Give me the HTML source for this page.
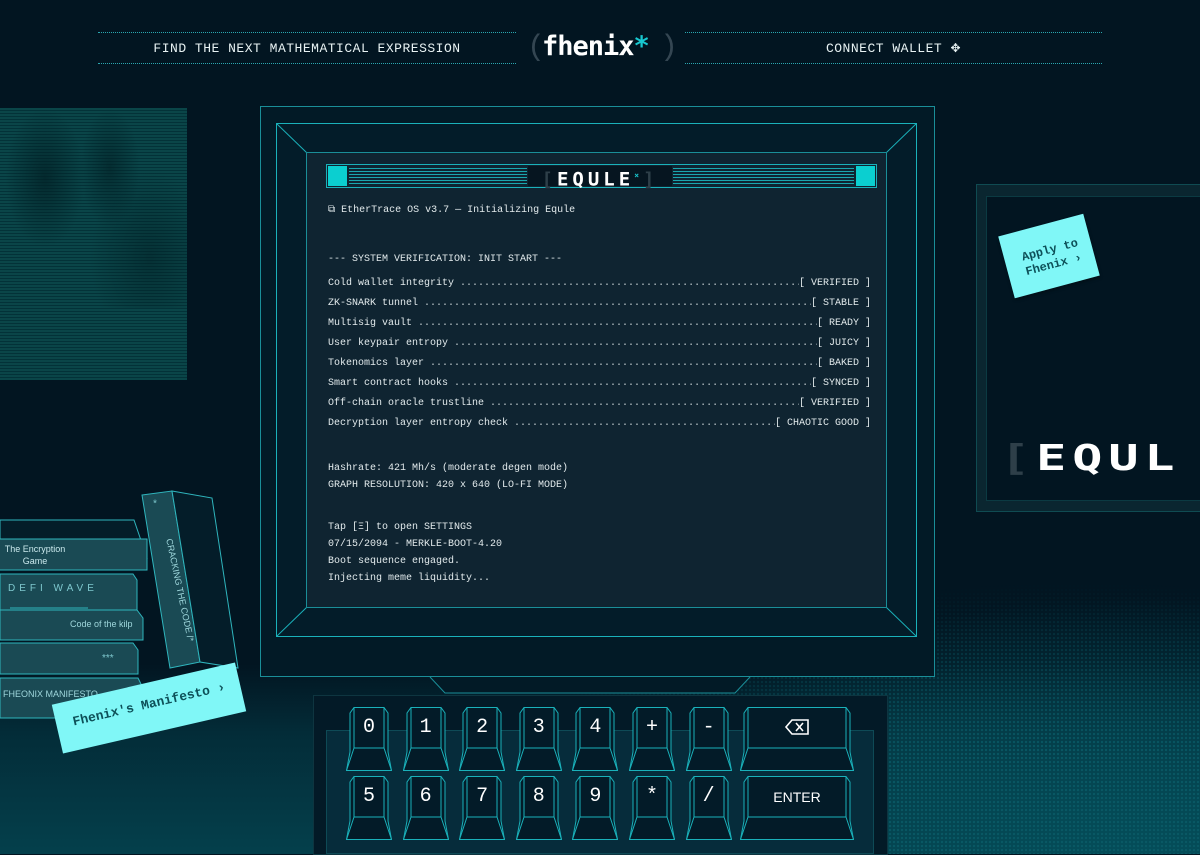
<!DOCTYPE html>
<html><head><meta charset="utf-8"><style>
*{box-sizing:border-box;margin:0;padding:0}
body{width:1200px;height:854px;background:#021521;overflow:hidden;position:relative;font-family:"Liberation Mono",monospace;color:#e6f0f2}
.abs{position:absolute}
.dither{position:absolute;left:0;top:500px;width:1200px;height:354px;
background:radial-gradient(ellipse 700px 320px at 95% 100%,rgba(4,78,90,.95),rgba(4,70,82,.5) 50%,rgba(2,21,33,0) 80%),linear-gradient(to top,rgba(4,66,78,.95) 0,rgba(4,60,72,.6) 120px,rgba(2,21,33,0) 190px);}
.dots{position:absolute;left:0;top:500px;width:1200px;height:354px;
background-image:radial-gradient(circle,#0a5a66 1px,transparent 1.4px);background-size:4px 4px;
-webkit-mask-image:radial-gradient(ellipse 800px 340px at 90% 100%,#000 30%,transparent 80%);opacity:.9}
.hdr{position:absolute;top:32px;height:32px;border-top:1px dotted #2aa7b0;border-bottom:1px dotted #2aa7b0;font-size:13px;letter-spacing:.5px;display:flex;align-items:center;justify-content:center;color:#e8f2f3}
.screen-line{display:flex;height:20px;align-items:center;font-size:10px;color:#e2eaec;white-space:nowrap}
.screen-line .d{flex:1;overflow:hidden;padding:0 6px;color:#c8d2d5}
.key{position:absolute;width:44px;height:64px}
.key>svg{position:absolute;left:0;top:0}
.key>span{position:absolute;left:0;right:0;top:6px;height:30px;text-align:center;font-size:20px;line-height:30px;color:#fff}
</style></head><body>
<div class="dither"></div><div class="dots"></div>

<!-- header -->
<div class="hdr" style="left:98px;width:418px">FIND THE NEXT MATHEMATICAL EXPRESSION</div>
<div class="hdr" style="left:685px;width:417px">CONNECT WALLET&nbsp;<span style="font-size:12px">✥</span></div>
<div class="abs" style="left:527px;top:30px;font-family:'Liberation Mono';font-size:30px;color:#344652;line-height:36px">(</div>
<div class="abs" style="left:542px;top:29px;font-family:'DejaVu Sans Mono',monospace;font-weight:bold;font-size:27px;color:#fff;line-height:36px;letter-spacing:-1px">fhenix<span style="color:#18c8d0">*</span></div>
<div class="abs" style="left:660px;top:30px;font-family:'Liberation Mono';font-size:30px;color:#344652;line-height:36px">)</div>

<!-- top-left art -->
<div class="abs" style="left:0;top:108px;width:187px;height:272px;background:repeating-linear-gradient(0deg,#0a4548 0 2px,#033238 2px 3px)"></div>
<div class="abs" style="left:0;top:108px;width:187px;height:200px;background:radial-gradient(ellipse 40px 70px at 45px 70px,rgba(1,30,35,.7),transparent),radial-gradient(ellipse 30px 60px at 110px 60px,rgba(1,30,35,.6),transparent),radial-gradient(ellipse 60px 90px at 150px 150px,rgba(1,30,35,.5),transparent)"></div>

<!-- right monitor -->
<div class="abs" style="left:976px;top:184px;width:240px;height:328px;border:1px solid #0f4b52;background:#0a2630"></div>
<div class="abs" style="left:986px;top:196px;width:230px;height:305px;background:#021521;border:1px solid #0b3a42"></div>
<div class="abs" style="left:1005px;top:224px;width:88px;height:64px;background:#80f7f7;transform:rotate(-15deg);transform-origin:center;box-shadow:0 2px 3px rgba(0,0,0,.3)"></div>
<div class="abs" style="left:1012px;top:243px;width:80px;transform:rotate(-15deg);text-align:center;font-size:12px;color:#0d5058;font-weight:bold;line-height:15px">Apply to<br>Fhenix ›</div>
<div class="abs" style="left:1000px;top:440px;font-family:'DejaVu Sans Mono';font-size:50px;color:#fff;font-weight:bold;letter-spacing:6px;line-height:50px;transform:scaleY(.72);transform-origin:top left"><span style="color:#2e3f49">[</span>EQUL</div>

<!-- main monitor -->
<div class="abs" style="left:260px;top:106px;width:675px;height:571px;border:1px solid #1a8e98;background:#021a26"></div>
<svg class="abs" style="left:260px;top:106px" width="675" height="600">
<rect x="16.5" y="17.5" width="640" height="513" fill="#031c29" stroke="#1ab1ba"/>
<line x1="16.5" y1="17.5" x2="46.5" y2="46.5" stroke="#1ab1ba"/><line x1="656.5" y1="17.5" x2="626.5" y2="46.5" stroke="#1ab1ba"/>
<line x1="16.5" y1="530.5" x2="46.5" y2="501.5" stroke="#1ab1ba"/><line x1="656.5" y1="530.5" x2="626.5" y2="501.5" stroke="#1ab1ba"/>
<path d="M170 571 L185 587 L475 587 L490 571" fill="#021a26" stroke="#1a8e98"/>
</svg>
<div class="abs" style="left:306px;top:152px;width:581px;height:456px;background:#0f2431;border:1px solid #1a8e98"></div>
<!-- title bar -->
<div class="abs" style="left:326px;top:164px;width:551px;height:24px;border:1px solid #1ab1ba;background:#0f2431"></div>
<div class="abs" style="left:328px;top:166px;width:19px;height:20px;background:#0bcfd0"></div>
<div class="abs" style="left:856px;top:166px;width:19px;height:20px;background:#0bcfd0"></div>
<div class="abs" style="left:349px;top:168px;width:178px;height:16px;background:repeating-linear-gradient(0deg,#1aa6ae 0 1px,transparent 1px 3px)"></div>
<div class="abs" style="left:673px;top:168px;width:181px;height:16px;background:repeating-linear-gradient(0deg,#1aa6ae 0 1px,transparent 1px 3px)"></div>
<div class="abs" style="left:528px;top:166px;width:144px;height:20px;background:#061520;text-align:center;font-family:'DejaVu Sans Mono';font-weight:bold;font-size:19px;line-height:20px;color:#fff;letter-spacing:4px"><span style="color:#2e3f49">[</span>EQULE<sup style="font-size:8px;color:#1ac8d0">×</sup><span style="color:#2e3f49">]</span></div>

<div class="abs" style="left:328px;top:200px;width:543px">
<div class="screen-line">⧉ EtherTrace OS v3.7 — Initializing Equle</div>
<div style="height:29px"></div>
<div class="screen-line">--- SYSTEM VERIFICATION: INIT START ---</div>
<div style="height:4px"></div>
<div class="screen-line"><span>Cold wallet integrity</span><span class="d">........................................................................</span><span>[ VERIFIED ]</span></div>
<div class="screen-line"><span>ZK-SNARK tunnel</span><span class="d">........................................................................</span><span>[ STABLE ]</span></div>
<div class="screen-line"><span>Multisig vault</span><span class="d">........................................................................</span><span>[ READY ]</span></div>
<div class="screen-line"><span>User keypair entropy</span><span class="d">........................................................................</span><span>[ JUICY ]</span></div>
<div class="screen-line"><span>Tokenomics layer</span><span class="d">........................................................................</span><span>[ BAKED ]</span></div>
<div class="screen-line"><span>Smart contract hooks</span><span class="d">........................................................................</span><span>[ SYNCED ]</span></div>
<div class="screen-line"><span>Off-chain oracle trustline</span><span class="d">........................................................................</span><span>[ VERIFIED ]</span></div>
<div class="screen-line"><span>Decryption layer entropy check</span><span class="d">........................................................................</span><span>[ CHAOTIC GOOD ]</span></div>
<div style="height:27px"></div>
<div class="screen-line" style="height:17px">Hashrate: 421 Mh/s (moderate degen mode)</div>
<div class="screen-line" style="height:17px">GRAPH RESOLUTION: 420 x 640 (LO-FI MODE)</div>
<div style="height:25px"></div>
<div class="screen-line" style="height:17px">Tap [Ξ] to open SETTINGS</div>
<div class="screen-line" style="height:17px">07/15/2094 - MERKLE-BOOT-4.20</div>
<div class="screen-line" style="height:17px">Boot sequence engaged.</div>
<div class="screen-line" style="height:17px">Injecting meme liquidity...</div>
</div>

<!-- keyboard -->
<div class="abs" style="left:313px;top:695px;width:575px;height:160px;background:#031a27;border:1px solid #0e3540"></div>
<div class="abs" style="left:326px;top:730px;width:548px;height:124px;background:#062c3b;border:1px solid #0e4a56"></div>
<div id="keys"></div>

<!-- books -->
<svg class="abs" style="left:0;top:490px" width="260" height="260">
<g stroke="#2fb5bd" stroke-width="1">
<polygon points="0,30 134,30 147,68 0,68" fill="#041d29"/>
<rect x="-1" y="49" width="148" height="31" fill="#1a4a54"/>
<polygon points="0,84 133,84 137,90 137,120 0,120" fill="#1a4a54"/>
<polygon points="0,120 137,120 143,128 143,150 0,150" fill="#1a4a54"/>
<polygon points="0,153 133,153 138,160 138,184 0,184" fill="#1a4a54"/>
<polygon points="0,188 138,188 143,198 143,228 0,228" fill="#1a4a54"/>
<polygon points="142,5 172,1 200,172 170,178" fill="#1a4a54"/>
<polygon points="172,1 212,8 238,178 200,172" fill="#041d29"/>
</g>
<line x1="10" y1="118" x2="88" y2="118" stroke="#2fb5bd"/>
</svg>
<div class="abs" style="left:3px;top:543px;font-family:'Liberation Sans';font-size:9px;color:#c9e8ec;text-align:center;width:64px;line-height:12px">The Encryption Game</div>
<div class="abs" style="left:8px;top:583px;font-family:'Liberation Sans';font-size:10px;color:#7ec8ce;letter-spacing:4px">DEFI WAVE</div>
<div class="abs" style="left:70px;top:619px;font-family:'Liberation Sans';font-size:9px;color:#9ed6db">Code of the kilp</div>
<div class="abs" style="left:102px;top:653px;font-family:'Liberation Sans';font-size:10px;color:#7ec8ce">***</div>
<div class="abs" style="left:3px;top:689px;font-family:'Liberation Sans';font-size:9px;color:#9ed6db">FHEONIX MANIFESTO</div>
<div class="abs" style="left:152px;top:500px;font-size:10px;color:#7ec8ce">*</div>
<div class="abs" style="left:120px;top:585px;width:120px;font-family:'Liberation Sans';font-size:9px;color:#9ed6db;transform:rotate(78deg);transform-origin:center;white-space:nowrap;text-align:center">CRACKING THE CODE /*</div>
<div class="abs" style="left:55px;top:683px;width:188px;height:50px;background:#80f7f7;transform:rotate(-13deg);transform-origin:center"></div>
<div class="abs" style="left:55px;top:697px;width:188px;text-align:center;transform:rotate(-13deg);font-size:13px;font-weight:bold;color:#0d5058">Fhenix's Manifesto ›</div>

<script>
const r1=['0','1','2','3','4','+','-'],r2=['5','6','7','8','9','*','/'];
let h='';
function key(x,y,w,l){
 const W=w,H=64;
 h+=`<div class="key" style="left:${x}px;top:${y}px;width:${W}px"><svg width="${W}" height="${H}"><g fill="none" stroke="#1ab1ba" stroke-width="1"><path d="M0.5 63.5 L${W-0.5} 63.5 L${W-4} 45 L${W-4} 6 L${W-8} 0.5 L8 0.5 L4 6 L4 45 Z" fill="#031b28"/><path d="M8 0.5 L8 41 L${W-8} 41 L${W-8} 0.5"/><path d="M8 41 L0.5 63.5 M${W-8} 41 L${W-0.5} 63.5"/></g></svg><span${l=='ENTER'?' style="font-size:14px;font-family:Liberation Sans"':''}>${l}</span></div>`;
}
r1.forEach((l,i)=>key(346+i*56.6,707,46,l));
r2.forEach((l,i)=>key(346+i*56.6,776,46,l));
key(740,707,114,'<svg width="26" height="18" viewBox="0 0 26 18" style="vertical-align:middle"><path d="M8 2 L24 2 L24 16 L8 16 L2 9 Z M12 5 L19 13 M19 5 L12 13" fill="none" stroke="#fff" stroke-width="1.6"/></svg>');
key(740,776,114,'ENTER');
document.getElementById('keys').innerHTML=h;
</script>
</body></html>
